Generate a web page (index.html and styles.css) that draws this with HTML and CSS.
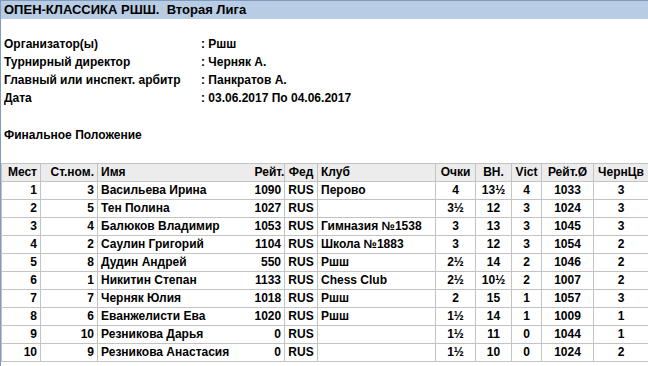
FILE: index.html
```html
<!DOCTYPE html>
<html lang="ru">
<head>
<meta charset="utf-8">
<link rel="stylesheet" href="styles.css">
</head>
<body>
<div class="frame">
  <div class="title">ОПЕН-КЛАССИКА РШШ.&nbsp; Вторая Лига</div>
  <div class="info">
    <div class="info-row"><span class="info-key">Организатор(ы)</span><span class="info-val">: Ршш</span></div>
    <div class="info-row"><span class="info-key">Турнирный директор</span><span class="info-val">: Черняк А.</span></div>
    <div class="info-row"><span class="info-key">Главный или инспект. арбитр</span><span class="info-val">: Панкратов А.</span></div>
    <div class="info-row"><span class="info-key">Дата</span><span class="info-val">: 03.06.2017 По 04.06.2017</span></div>
  </div>
  <div class="subtitle">Финальное Положение</div>
  <table class="standings">
    <colgroup>
      <col class="c-place"><col class="c-start"><col class="c-name"><col class="c-rating"><col class="c-fed"><col class="c-club"><col class="c-pts"><col class="c-bh"><col class="c-vict"><col class="c-avg"><col class="c-black">
    </colgroup>
    <thead>
      <tr>
        <th class="r">Мест</th><th class="r">Ст.ном.</th><th class="l name">Имя</th><th class="r rating">Рейт.</th><th class="c">Фед</th><th class="l">Клуб</th><th class="c">Очки</th><th class="c">ВН.</th><th class="c">Vict</th><th class="c">Рейт.Ø</th><th class="c">ЧернЦв</th>
      </tr>
    </thead>
    <tbody>
      <tr><td class="r">1</td><td class="r">3</td><td class="l name">Васильева Ирина</td><td class="r rating">1090</td><td class="c">RUS</td><td class="l">Перово</td><td class="c">4</td><td class="c">13½</td><td class="c">4</td><td class="c">1033</td><td class="c">3</td></tr>
      <tr><td class="r">2</td><td class="r">5</td><td class="l name">Тен Полина</td><td class="r rating">1027</td><td class="c">RUS</td><td class="l"></td><td class="c">3½</td><td class="c">12</td><td class="c">3</td><td class="c">1024</td><td class="c">3</td></tr>
      <tr><td class="r">3</td><td class="r">4</td><td class="l name">Балюков Владимир</td><td class="r rating">1053</td><td class="c">RUS</td><td class="l">Гимназия №1538</td><td class="c">3</td><td class="c">13</td><td class="c">3</td><td class="c">1045</td><td class="c">3</td></tr>
      <tr><td class="r">4</td><td class="r">2</td><td class="l name">Саулин Григорий</td><td class="r rating">1104</td><td class="c">RUS</td><td class="l">Школа №1883</td><td class="c">3</td><td class="c">12</td><td class="c">3</td><td class="c">1054</td><td class="c">2</td></tr>
      <tr><td class="r">5</td><td class="r">8</td><td class="l name">Дудин Андрей</td><td class="r rating">550</td><td class="c">RUS</td><td class="l">Ршш</td><td class="c">2½</td><td class="c">14</td><td class="c">2</td><td class="c">1046</td><td class="c">2</td></tr>
      <tr><td class="r">6</td><td class="r">1</td><td class="l name">Никитин Степан</td><td class="r rating">1133</td><td class="c">RUS</td><td class="l">Chess Club</td><td class="c">2½</td><td class="c">10½</td><td class="c">2</td><td class="c">1007</td><td class="c">2</td></tr>
      <tr><td class="r">7</td><td class="r">7</td><td class="l name">Черняк Юлия</td><td class="r rating">1018</td><td class="c">RUS</td><td class="l">Ршш</td><td class="c">2</td><td class="c">15</td><td class="c">1</td><td class="c">1057</td><td class="c">3</td></tr>
      <tr><td class="r">8</td><td class="r">6</td><td class="l name">Еванжелисти Ева</td><td class="r rating">1020</td><td class="c">RUS</td><td class="l">Ршш</td><td class="c">1½</td><td class="c">14</td><td class="c">1</td><td class="c">1009</td><td class="c">1</td></tr>
      <tr><td class="r">9</td><td class="r">10</td><td class="l name">Резникова Дарья</td><td class="r rating">0</td><td class="c">RUS</td><td class="l"></td><td class="c">1½</td><td class="c">11</td><td class="c">0</td><td class="c">1044</td><td class="c">1</td></tr>
      <tr><td class="r">10</td><td class="r">9</td><td class="l name">Резникова Анастасия</td><td class="r rating">0</td><td class="c">RUS</td><td class="l"></td><td class="c">1½</td><td class="c">10</td><td class="c">0</td><td class="c">1024</td><td class="c">2</td></tr>
    </tbody>
  </table>
</div>
</body>
</html>
```
FILE: styles.css
```css
html, body {
  margin: 0;
  padding: 0;
  background: #ffffff;
}
body {
  font-family: "Liberation Sans", Arial, sans-serif;
  font-size: 12px;
  font-weight: bold;
  color: #000000;
}
.frame {
  border-left: 1px solid #7f9cc0;
  border-top: 1px solid #7f9cc0;
  min-height: 365px;
}
.title {
  background: #b8cce4;
  height: 18px;
  line-height: 18px;
  font-size: 13px;
  padding-left: 3px;
  white-space: pre;
}
.info {
  padding-top: 16px;
  padding-left: 3px;
}
.info-row {
  display: flex;
  height: 18px;
  line-height: 18px;
}
.info-key {
  width: 197px;
}
.subtitle {
  margin-top: 19px;
  padding-left: 3px;
  height: 18px;
  line-height: 18px;
}
.standings {
  margin-top: 19px;
  border-collapse: collapse;
  table-layout: fixed;
  width: 647px;
}
.standings th, .standings td {
  height: 17px;
  padding: 0 3px;
  border: 1px solid #c3c3c3;
  line-height: 17px;
  white-space: nowrap;
  overflow: hidden;
}
.standings th {
  background: #ececec;
  font-weight: bold;
}
.standings .name { border-right: none; }
.standings .rating { border-left: none; }
.standings .r { text-align: right; }
.standings .l { text-align: left; }
.standings .c { text-align: center; }
.c-place { width: 39px; }
.c-start { width: 57px; }
.c-name { width: 154px; }
.c-rating { width: 33px; }
.c-fed { width: 33px; }
.c-club { width: 118px; }
.c-pts { width: 40px; }
.c-bh { width: 36px; }
.c-vict { width: 30px; }
.c-avg { width: 52px; }
.c-black { width: 55px; }
```
